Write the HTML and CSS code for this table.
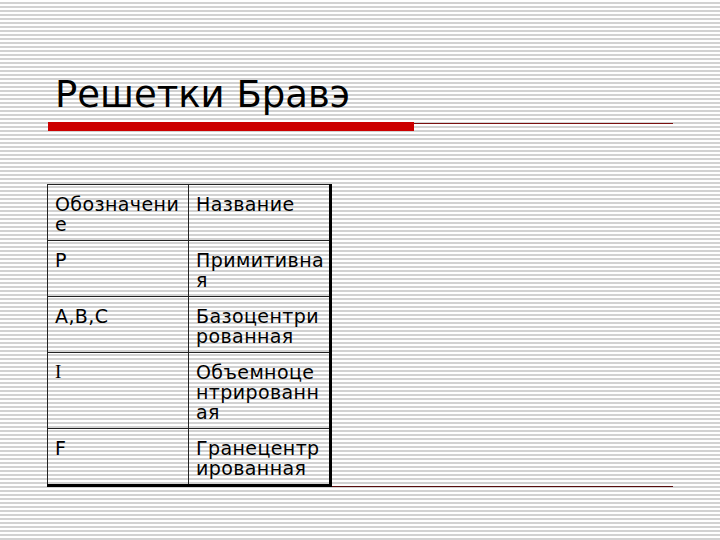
FILE: index.html
```html
<!DOCTYPE html>
<html lang="ru">
<head>
<meta charset="utf-8">
<link rel="stylesheet" href="styles.css">
</head>
<body>
<div class="slide">
  <h1 class="title">Решетки Бравэ</h1>
  <div class="rule">
    <div class="rule-bar"></div>
    <div class="rule-line"></div>
  </div>
  <div class="content">
    <table class="grid">
      <tr><td class="c1">Обозначени е</td><td class="c2">Название</td></tr>
      <tr><td class="c1">P</td><td class="c2">Примитивна я</td></tr>
      <tr><td class="c1">A,B,C</td><td class="c2">Базоцентри рованная</td></tr>
      <tr><td class="c1 serif">I</td><td class="c2">Объемноце нтрированн ая</td></tr>
      <tr><td class="c1">F</td><td class="c2">Гранецентр ированная</td></tr>
    </table>
    <div class="bottom-line"></div>
  </div>
</div>
</body>
</html>
```

FILE: styles.css
```css
html, body {
  margin: 0;
  padding: 0;
}
.slide {
  width: 720px;
  height: 540px;
  box-sizing: border-box;
  background: repeating-linear-gradient(to bottom, #ffffff 0, #ffffff 2.5px, #d2d2d2 2.5px, #d2d2d2 4px);
  font-family: "DejaVu Sans", Verdana, sans-serif;
  color: #000;
  padding-top: 72px;
  display: flex;
  flex-direction: column;
}
.title {
  margin: 0 0 0 55px;
  font-weight: normal;
  font-size: 37px;
  line-height: 46px;
}
.rule {
  display: flex;
  margin: 4px 0 0 48px;
  width: 625px;
  height: 9px;
}
.rule-bar {
  width: 366px;
  height: 9px;
  background: #cc0000;
}
.rule-line {
  flex: 1;
  height: 1px;
  margin-top: 1px;
  background: #7a1010;
}
.content {
  margin: 53px 0 0 47px;
  position: relative;
  width: 626px;
}
.grid {
  border-collapse: collapse;
  border-top: 1px solid #000;
  border-left: 1px solid #000;
  border-right: 3px solid #000;
  border-bottom: 3px solid #000;
  font-size: 19px;
  line-height: 20px;
  letter-spacing: 0.4px;
  position: relative;
  z-index: 1;
}
.grid td {
  border: 1px solid #222;
  vertical-align: top;
  padding: 9px 0 6px 7px;
  box-sizing: border-box;
  white-space: pre-line;
}
.c1 {
  width: 141px;
}
.c2 {
  width: 142px;
}
.serif {
  font-family: "Liberation Serif", "Times New Roman", serif;
}
.bottom-line {
  position: absolute;
  left: 1px;
  right: 0;
  bottom: 0;
  height: 1px;
  background: #5a0f0f;
}
```
